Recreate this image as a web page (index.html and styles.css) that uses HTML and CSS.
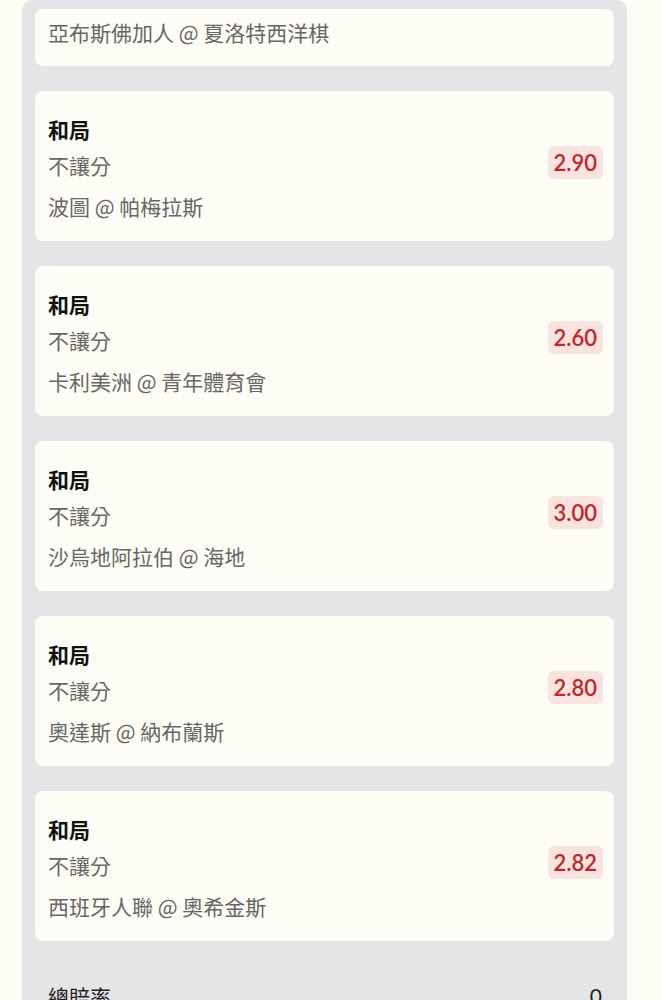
FILE: index.html
```html
<!DOCTYPE html>
<html lang="zh-Hant">
<head>
  <meta charset="UTF-8" />
  <title>投注單</title>
  <link rel="stylesheet" href="styles.css">
</head>
<body>

  <div class="slip-panel">
    <div class="bet-card bet-card-tail">
      <div class="bet-info">
        <div class="bet-match">亞布斯佛加人 @ 夏洛特西洋棋</div>
      </div>
    </div>

    <div class="bet-card">
      <div class="bet-info">
        <div class="bet-title">和局</div>
        <div class="bet-market">不讓分</div>
        <div class="bet-match">波圖 @ 帕梅拉斯</div>
      </div>
      <div class="odds-badge">2.90</div>
    </div>

    <div class="bet-card">
      <div class="bet-info">
        <div class="bet-title">和局</div>
        <div class="bet-market">不讓分</div>
        <div class="bet-match">卡利美洲 @ 青年體育會</div>
      </div>
      <div class="odds-badge">2.60</div>
    </div>

    <div class="bet-card">
      <div class="bet-info">
        <div class="bet-title">和局</div>
        <div class="bet-market">不讓分</div>
        <div class="bet-match">沙烏地阿拉伯 @ 海地</div>
      </div>
      <div class="odds-badge">3.00</div>
    </div>

    <div class="bet-card">
      <div class="bet-info">
        <div class="bet-title">和局</div>
        <div class="bet-market">不讓分</div>
        <div class="bet-match">奧達斯 @ 納布蘭斯</div>
      </div>
      <div class="odds-badge">2.80</div>
    </div>

    <div class="bet-card">
      <div class="bet-info">
        <div class="bet-title">和局</div>
        <div class="bet-market">不讓分</div>
        <div class="bet-match">西班牙人聯 @ 奧希金斯</div>
      </div>
      <div class="odds-badge">2.82</div>
    </div>

    <div class="total-row">
      <span class="total-label">總賠率</span>
      <span class="total-value">0</span>
    </div>
  </div>

</body>
</html>
```

FILE: styles.css
```css
body {
  margin: 0;
  font-family: "Noto Sans CJK TC", "Noto Sans", sans-serif;
  background: #fefdf5;
  height: 1000px;
  overflow: hidden;
}

.slip-panel {
  margin-left: 22px;
  width: 605px;
  box-sizing: border-box;
  min-height: 1000px;
  padding: 9px 13px 0;
  background: #e4e5e7;
  border-radius: 10px 10px 0 0;
  display: flex;
  flex-direction: column;
  gap: 25px;
}

.bet-card {
  background: #fefdf5;
  border-radius: 8px;
  padding: 23px 11px 20px 13px;
  display: flex;
  align-items: center;
  justify-content: space-between;
}

.bet-card-tail {
  padding-top: 8px;
  padding-bottom: 19px;
}

.bet-info {
  display: flex;
  flex-direction: column;
}

.bet-title {
  font-size: 21px;
  font-weight: bold;
  line-height: 30px;
  color: #111;
}

.bet-market {
  margin-top: 6px;
  font-size: 21px;
  line-height: 30px;
  color: #666;
}

.bet-match {
  margin-top: 11px;
  font-size: 21px;
  line-height: 30px;
  color: #666;
}

.bet-card-tail .bet-match {
  margin-top: 0;
}

.odds-badge {
  padding: 0 6px;
  height: 33px;
  line-height: 33px;
  border-radius: 6px;
  background: #f8e3de;
  color: #c0272d;
  font-family: Lato, "Noto Sans", sans-serif;
  font-size: 22px;
  font-weight: 600;
  margin-top: -10px;
}

.total-row {
  margin-top: 15px;
  display: flex;
  justify-content: space-between;
  padding: 0 12px 0 13px;
  font-size: 21px;
  line-height: 30px;
  color: #222;
}

.total-value {
  font-family: Lato, "Noto Sans", sans-serif;
}
```
